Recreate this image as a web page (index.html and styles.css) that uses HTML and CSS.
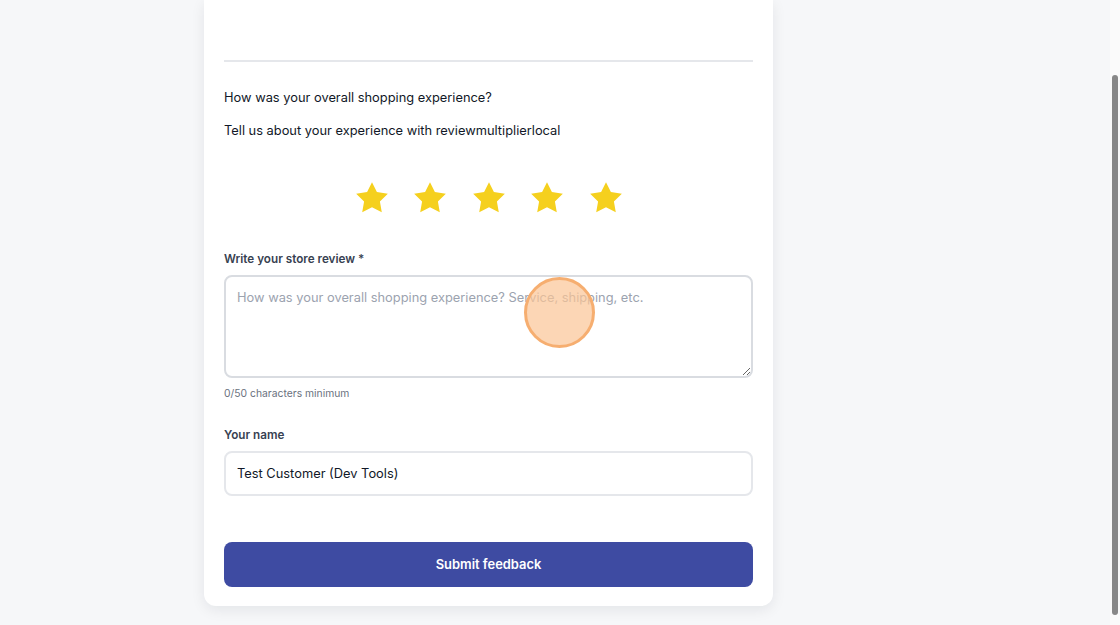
FILE: index.html
```html
<!DOCTYPE html>
<html lang="en">
<head>
<meta charset="utf-8">
<title>Store review</title>
<link rel="stylesheet" href="styles.css">
</head>
<body>
<div class="page">
  <main class="main">
    <section class="card">
      <div class="card-top"></div>
      <hr class="divider">
      <p class="intro">How was your overall shopping experience?</p>
      <p class="intro second">Tell us about your experience with reviewmultiplierlocal</p>
      <div class="stars">
        <svg class="star" viewBox="0 0 24 24"><polygon points="12,2 15.09,8.26 22,9.27 17,14.14 18.18,21.02 12,17.77 5.82,21.02 7,14.14 2,9.27 8.91,8.26"/></svg>
        <svg class="star" viewBox="0 0 24 24"><polygon points="12,2 15.09,8.26 22,9.27 17,14.14 18.18,21.02 12,17.77 5.82,21.02 7,14.14 2,9.27 8.91,8.26"/></svg>
        <svg class="star" viewBox="0 0 24 24"><polygon points="12,2 15.09,8.26 22,9.27 17,14.14 18.18,21.02 12,17.77 5.82,21.02 7,14.14 2,9.27 8.91,8.26"/></svg>
        <svg class="star" viewBox="0 0 24 24"><polygon points="12,2 15.09,8.26 22,9.27 17,14.14 18.18,21.02 12,17.77 5.82,21.02 7,14.14 2,9.27 8.91,8.26"/></svg>
        <svg class="star" viewBox="0 0 24 24"><polygon points="12,2 15.09,8.26 22,9.27 17,14.14 18.18,21.02 12,17.77 5.82,21.02 7,14.14 2,9.27 8.91,8.26"/></svg>
      </div>
      <label class="label" for="review">Write your store review *</label>
      <div class="textarea-wrap">
        <textarea id="review" class="textarea" placeholder="How was your overall shopping experience? Service, shipping, etc."></textarea>
        <span class="click-dot"></span>
      </div>
      <div class="helper">0/50 characters minimum</div>
      <label class="label name-label" for="name">Your name</label>
      <input id="name" class="input" type="text" value="Test Customer (Dev Tools)">
      <button class="submit" type="button">Submit feedback</button>
    </section>
  </main>
  <div class="scrollbar"><div class="thumb"></div></div>
</div>
</body>
</html>
```

FILE: styles.css
```css
* { box-sizing: border-box; }
html, body { margin: 0; padding: 0; }
body {
  font-family: Inter, "Noto Sans", "Liberation Sans", sans-serif;
  background: #f6f7f9;
  color: #111827;
  height: 625px;
  overflow: hidden;
}
.page {
  display: flex;
  height: 625px;
}
.main {
  flex: 1;
  padding-left: 204px;
}
.card {
  width: 569px;
  background: #ffffff;
  border-radius: 0 0 12px 12px;
  box-shadow: 0 4px 14px rgba(15, 23, 42, 0.08);
  padding: 0 20px 19px;
  display: flex;
  flex-direction: column;
}
.card-top { height: 60px; }
.divider {
  margin: 0;
  border: 0;
  border-top: 2px solid #e5e7eb;
}
.intro {
  margin: 26px 0 0;
  font-size: 12.85px;
  line-height: 20px;
  color: #111827;
}
.intro.second { margin-top: 13px; }
.stars {
  display: flex;
  justify-content: center;
  gap: 20.5px;
  margin-top: 38px;
}
.star {
  width: 38px;
  height: 38px;
  fill: #f5d01e;
}
.label {
  display: block;
  margin-top: 33px;
  font-size: 11.7px;
  line-height: 18px;
  font-weight: 600;
  color: #374151;
}
.textarea-wrap {
  position: relative;
  margin-top: 7px;
}
.textarea {
  display: block;
  width: 100%;
  height: 103px;
  border: 2px solid #d9dce1;
  border-radius: 8px;
  padding: 11px 11px;
  font-family: inherit;
  font-size: 12.85px;
  line-height: 20px;
  color: #111827;
  resize: vertical;
  outline: none;
}
.textarea::placeholder { color: #9ca3af; }
.click-dot {
  position: absolute;
  left: 300px;
  top: 2px;
  width: 71px;
  height: 71px;
  border-radius: 50%;
  background: rgba(251, 196, 150, 0.7);
  border: 3px solid #f6ae70;
}
.helper {
  margin-top: 8px;
  font-size: 10.35px;
  line-height: 14px;
  color: #6b7280;
}
.name-label { margin-top: 26px; }
.input {
  display: block;
  width: 100%;
  height: 45px;
  margin-top: 7px;
  border: 2px solid #e5e7eb;
  border-radius: 8px;
  padding: 0 11px;
  font-family: inherit;
  font-size: 12.85px;
  color: #111827;
  outline: none;
}
.submit {
  margin-top: 46px;
  height: 45px;
  width: 100%;
  border: 0;
  border-radius: 8px;
  background: #3e4ba2;
  color: #ffffff;
  font-family: inherit;
  font-size: 12.9px;
  font-weight: 600;
  cursor: pointer;
}
.scrollbar {
  width: 10px;
  background: #fafafa;
  padding: 75px 2px 10px 2px;
  display: flex;
}
.thumb {
  flex: 1;
  background: #888888;
  border-radius: 3px;
}
```
